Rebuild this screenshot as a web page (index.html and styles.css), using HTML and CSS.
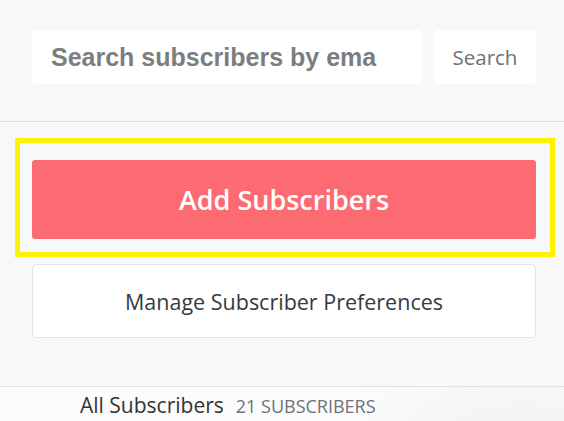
FILE: index.html
```html
<!DOCTYPE html>
<html>
<head>
<meta charset="utf-8">
<link rel="stylesheet" href="styles.css">
</head>
<body>
<div class="top">
  <div class="search-row">
    <div class="search-input">Search subscribers by ema</div>
    <div class="search-btn">Search</div>
  </div>
</div>
<div class="actions">
  <div class="highlight">
    <div class="add-btn">Add Subscribers</div>
  </div>
  <div class="manage-btn">Manage Subscriber Preferences</div>
</div>
<div class="list-head">
  <span class="list-title">All Subscribers</span>
  <span class="list-count">21 SUBSCRIBERS</span>
</div>
</body>
</html>
```
FILE: styles.css
```css
html, body {
  margin: 0;
  padding: 0;
  width: 564px;
  height: 421px;
  overflow: hidden;
  background: #f7f8fa;
  font-family: "Open Sans", "Liberation Sans", sans-serif;
}
.top {
  padding: 30px 28px 0 32px;
  height: 91px;
  border-bottom: 1px solid #dfe2e6;
}
.search-row {
  display: flex;
  gap: 12px;
  height: 54px;
}
.search-input {
  width: 390px;
  background: #fff;
  border-radius: 4px;
  display: flex;
  align-items: center;
  padding-left: 19px;
  box-sizing: border-box;
  font-family: "Liberation Sans", Arial, sans-serif;
  font-weight: 700;
  font-size: 25px;
  color: #7b7e80;
  white-space: nowrap;
  overflow: hidden;
}
.search-btn {
  width: 102px;
  background: #fff;
  border-radius: 4px;
  display: flex;
  align-items: center;
  justify-content: center;
  font-size: 20.5px;
  color: #6c7278;
}
.actions {
  padding: 16px 9px 0 15px;
  border-bottom: 1px solid #dfe2e6;
  box-sizing: border-box;
  height: 265px;
}
.highlight {
  border: 5px solid #fff200;
  height: 119px;
  box-sizing: border-box;
  padding: 17px 14px 13px 12px;
}
.add-btn {
  height: 79px;
  background: #fc6b72;
  border-radius: 3px;
  color: #fff;
  font-weight: 600;
  font-size: 27px;
  display: flex;
  align-items: center;
  justify-content: center;
}
.manage-btn {
  margin: 7px 19px 0 17px;
  height: 74px;
  box-sizing: border-box;
  background: #fff;
  border: 1px solid #dfe2e6;
  border-radius: 5px;
  display: flex;
  align-items: center;
  justify-content: center;
  font-size: 21.5px;
  font-weight: 500;
  color: #343a40;
}
.list-head {
  background: radial-gradient(ellipse 200px 120px at 520px 70px, #eef0f2, #fcfcfc);
  height: 40px;
  padding: 4px 0 0 80px;
  box-sizing: border-box;
  display: flex;
  align-items: baseline;
  gap: 12px;
}
.list-title {
  font-size: 21px;
  color: #333;
}
.list-count {
  font-size: 18px;
  color: #6c7278;
}
```
